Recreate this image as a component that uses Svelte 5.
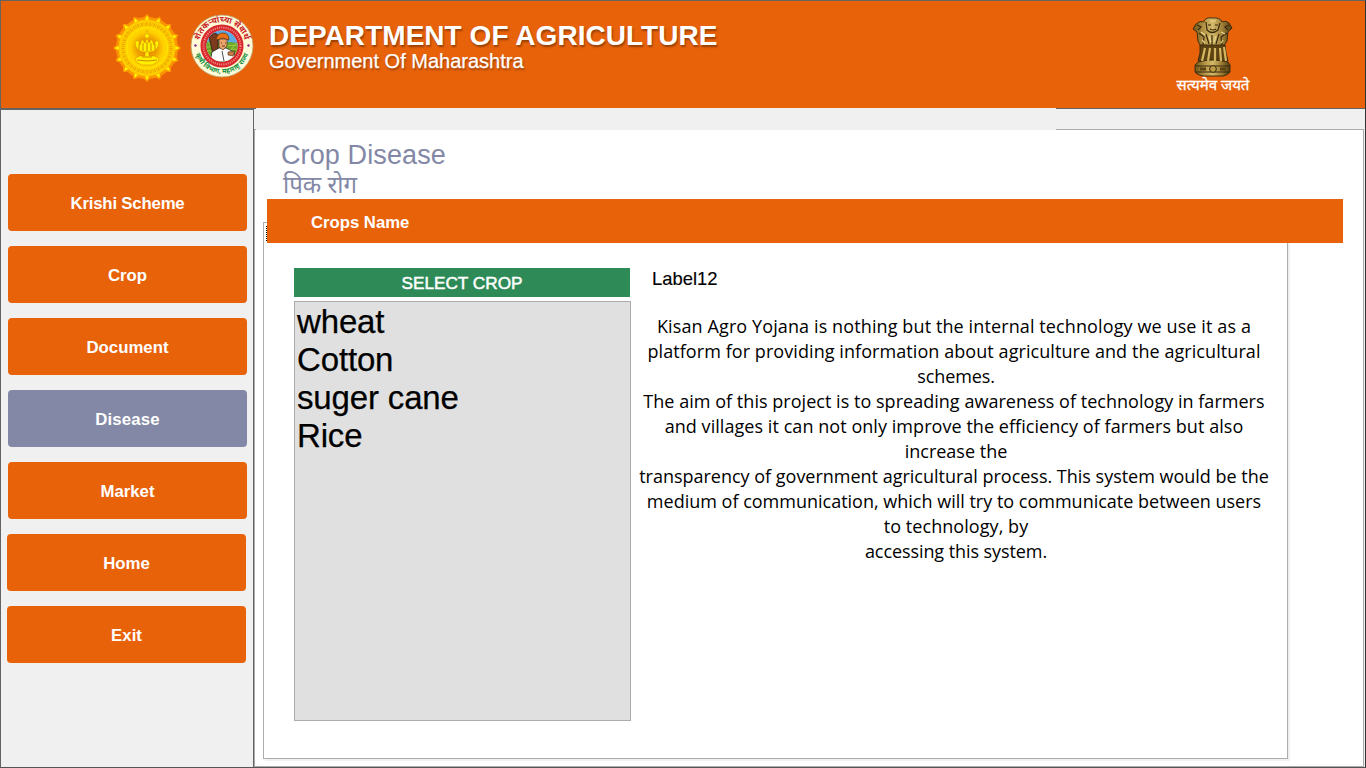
<script>
  const nav = [
    { label: 'Krishi Scheme', ls: -0.2 },
    { label: 'Crop' },
    { label: 'Document' },
    { label: 'Disease', active: true, ls: 0.15 },
    { label: 'Market' },
    { label: 'Home', shifted: true },
    { label: 'Exit', shifted: true }
  ];
  const crops = ['wheat', 'Cotton', 'suger cane', 'Rice'];
  const lines = [
    { text: 'Kisan Agro Yojana is nothing but the internal technology we use it as a', ls: 0.11, wraps: true },
    { text: 'platform for providing information about agriculture and the agricultural', ls: 0.07, wraps: true },
    { text: 'schemes.', ls: -0.1 },
    { text: 'The aim of this project is to spreading awareness of technology in farmers', ls: 0.03, wraps: true },
    { text: 'and villages it can not only improve the efficiency of farmers but also', ls: 0.055, wraps: true },
    { text: 'increase the', ls: 0 },
    { text: 'transparency of government agricultural process. This system would be the', ls: -0.01, wraps: true },
    { text: 'medium of communication, which will try to communicate between users', ls: 0, wraps: true },
    { text: 'to technology, by', ls: 0.06 },
    { text: 'accessing this system.', ls: -0.08 }
  ];
  const rays = Array.from({ length: 16 }, (_, i) => i * 22.5);
</script>

<div class="window">
  <header>
    <svg class="sun" width="70" height="70" viewBox="-35 -35 70 70">
      <defs>
        <radialGradient id="glow">
          <stop offset="0" stop-color="#e27f00" />
          <stop offset=".5" stop-color="#efa000" />
          <stop offset=".8" stop-color="#ffcf00" />
          <stop offset="1" stop-color="#ffd800" />
        </radialGradient>
      </defs>
      <circle r="31" fill="#fb9400" />
      {#each rays as a}
        <g transform="rotate({a})">
          <path d="M-5-29L0-34 5-29Z" fill="#fb9400" />
          <path d="M-2.2-28L0-32.5 2.2-28Z" fill="#fff600" />
        </g>
      {/each}
      <circle r="28" fill="#ffd000" stroke="#ffc000" stroke-width="1" />
      <circle r="24" fill="none" stroke="#eda800" stroke-width="3.6" stroke-dasharray="1.4 .9 .7 1.1" />
      <circle r="20.5" fill="url(#glow)" stroke="#ffe400" stroke-width="1" />
      <g fill="#fff000" stroke="#d78400" stroke-width=".5">
        <path d="M-12-6Q-12 2-4 4H4Q12 2 12-6L9-8 7-3 5-9 2-5 0-10-2-5-5-9-7-3-9-8Z" />
        <path d="M-2 4H2V8H7Q12 9 12 12L9 15 5 17H-5L-9 15-12 12Q-12 9-7 8H-2Z" />
        <circle cy="-12" r="2.4" />
        <circle cy="-17" r="1" />
      </g>
      <path d="M-8-4V2M-4-5V3M0-6V3M4-5V3M8-4V2M-10 12Q0 14 10 12M-5 9H5" fill="none" stroke="#c87a00" stroke-width=".9" />
    </svg>

    <svg class="seal" width="64" height="64" viewBox="-32 -32 64 64">
      <defs>
        <path id="sealTop" d="M-22.6 3.5A23 23 0 1 1 22.6 3.5" />
        <path id="sealBottom" d="M-26.9 6A27.6 27.6 0 0 0 26.9 6" />
        <clipPath id="inner"><circle r="15.5" /></clipPath>
      </defs>
      <circle r="31" fill="#fffbd8" stroke="#b9a26a" stroke-width=".8" />
      <circle r="18.5" fill="none" stroke="#d7262c" stroke-width="6" />
      <circle r="18.5" fill="none" stroke="#f28b80" stroke-width="2" stroke-dasharray="1.1 1.1" />
      <g clip-path="url(#inner)">
        <rect x="-16" y="-16" width="32" height="17" fill="#5ba9e6" />
        <path d="M-16-4Q-4-6 16-3V16H-16Z" fill="#6aa72c" />
        <path d="M-16 1L16-1M-16 5L16 3M-14-4L-4 8M14-3L6 8" stroke="#a7c842" stroke-width=".9" />
        <path d="M-13-9L-7-13-4-11V8L-8 12-10 4Z" fill="#7b3b1c" stroke="#2c1710" stroke-width=".8" />
        <path d="M-12 16L-10 6-3 2H4L12 6 13 16Z" fill="#fff" stroke="#222" stroke-width=".8" />
        <path d="M-3-7H5V0L1 4-3 1Z" fill="#efa469" stroke="#432" stroke-width=".7" />
        <path d="M-6-6Q-5-13 1-13T7-6L1-8Z" fill="#ef7314" stroke="#60300d" stroke-width=".7" />
        <path d="M6 6L13 5 11 10 6 9Z" fill="#c87740" stroke="#432" stroke-width=".6" />
        <path d="M0 5L2 15M-1-3H0M3-3H4M0 0H3" stroke="#222" stroke-width=".8" />
      </g>
      <text class="sealText red"><textPath href="#sealTop" startOffset="50%" text-anchor="middle">शेतकऱ्यांच्या सेवार्थ</textPath></text>
      <text class="sealText green"><textPath href="#sealBottom" startOffset="50%" text-anchor="middle">कृषी विभाग, महाराष्ट्र राज्य</textPath></text>
      <g fill="#8a2a8a"><circle cx="-26.5" cy="-.5" r="1.2" /><circle cx="26.5" cy="-.5" r="1.2" /></g>
    </svg>

    <div class="titles">
      <h1>DEPARTMENT OF AGRICULTURE</h1>
      <p>Government Of Maharashtra</p>
    </div>

    <div class="emblem">
      <svg width="42" height="60" viewBox="0 0 42 60">
        <defs>
          <linearGradient id="gold">
            <stop offset="0" stop-color="#6d5418" />
            <stop offset=".3" stop-color="#b89848" />
            <stop offset=".5" stop-color="#d4ba6a" />
            <stop offset=".75" stop-color="#a08036" />
            <stop offset="1" stop-color="#4f3a10" />
          </linearGradient>
        </defs>
        <g stroke="#33270c" stroke-width=".9" fill="url(#gold)">
          <path d="M12 4Q14 0 20 1 28 0 30 5 34 3 37 6L40 11 36 15 35 24 31 30H9L6 24 5 15 1 12 4 7Q8 3 12 5Z" />
          <path d="M8 28H33L34 36 36 44H6L8 36Z" fill="#5d4312" />
          <path d="M6 45Q21 41 36 45L38 48V55Q36 58 31 59H11Q5 58 3 55V48Z" />
        </g>
        <path d="M13 31L10 44M18 31L16 44M23 31V44M28 31L29 44M32 30L34 44" stroke="#d3b562" stroke-width="2.2" />
        <path d="M14 5L15 13Q20 18 26 13L28 6M16 8H19M23 8H26M18 12Q21 14 24 12M5 8L9 10 6 13M37 8L33 10 36 13M7 16L12 20 11 28M35 16L29 20 30 28M14 17L17 27M27 17L24 27M20 18V28M4 49H38M4 55H37" fill="none" stroke="#38290c" stroke-width="1.2" />
        <path d="M9 15L13 18M29 15L33 17M17 19L19 25M24 19L22 25M10 23L13 26M31 23L29 26M18 4H24" stroke="#e8d58e" stroke-width="1.2" />
        <circle cx="21" cy="52" r="3.4" fill="#bc9b47" stroke="#38290c" />
        <path d="M8 52H14M28 52H34" stroke="#5d4312" stroke-width="3" />
      </svg>
      <span class="motto">सत्यमेव जयते</span>
    </div>
  </header>

  <div class="body">
    <aside>
      {#each nav as item}
        <button class:active={item.active} class:shifted={item.shifted} style="letter-spacing: {item.ls ?? 0}px">{item.label}</button>
      {/each}
    </aside>

    <main>
      <div class="strip"></div>
      <section class="page">
        <h2>Crop Disease</h2>
        <p class="sub">पिक रोग</p>
        <div class="group">
          <div class="banner">Crops Name</div>
          <div class="content">
            <div class="picker">
              <div class="select">SELECT CROP</div>
              <ul>
                {#each crops as crop}<li>{crop}</li>{/each}
              </ul>
            </div>
            <div class="info">
              <div class="label">Label12</div>
              <div class="about">
                {#each lines as line}
                  <div class:wraps={line.wraps}><span style="letter-spacing: {line.ls}px">{line.text}</span></div>
                {/each}
              </div>
            </div>
          </div>
        </div>
      </section>
    </main>
  </div>
</div>

<style>
  :global(body) { margin: 0; overflow: hidden; }
  * { box-sizing: border-box; }
  .window {
    width: 1366px; height: 768px; display: flex; flex-direction: column;
    background: #f0f0f0; border: 1px solid #646464; border-right-color: #333; border-bottom-color: #555;
    font-family: "Liberation Sans", Arial, sans-serif; overflow: hidden;
  }
  header {
    height: 108px; flex: none; background: #e8620a; border-bottom: 1px solid #646464;
    display: flex; align-items: flex-start; padding: 12px 115px 0 111px;
  }
  .seal { margin: 1px 0 0 8px; overflow: visible; }
  .sealText { font-family: "Noto Sans", sans-serif; font-size: 8.4px; font-weight: 700; }
  .red { fill: #c81e28; }
  .green { fill: #149044; font-size: 6.8px; }
  .titles { margin: 7px 0 0 15px; color: #fff; text-shadow: 1px 2px 2px rgba(70, 30, 0, .5); white-space: nowrap; }
  h1 { margin: 0; font-size: 28px; line-height: 32px; font-weight: 700; letter-spacing: .04px; }
  .titles p { margin: -1px 0 0; font-size: 20px; line-height: 20px; -webkit-text-stroke: .25px #fff; }
  .emblem { margin: 4px 0 0 auto; width: 74px; display: flex; flex-direction: column; align-items: center; }
  .emblem svg { display: block; }
  .motto {
    margin-top: -2px; font-family: "Noto Sans", sans-serif; color: #fff; font-size: 15px; line-height: 18px;
    white-space: nowrap; -webkit-text-stroke: .3px #fff;
  }

  .body { flex: 1; display: flex; min-height: 0; }
  aside {
    width: 253px; flex: none; border-right: 1px solid #646464; border-top: 1px solid #646464;
    display: flex; flex-direction: column; gap: 15px; padding: 64px 0 0 7px;
  }
  button {
    width: 239px; height: 57px; flex: none; border: 0; border-radius: 4px; background: #e8620a; color: #fff;
    font: 700 16.8px/57px "Liberation Sans", Arial, sans-serif; padding: 1px 0 0; text-align: center;
  }
  .active { background: #8388a6; }
  .shifted { margin-left: -1px; }

  main { flex: 1; display: flex; flex-direction: column; padding-right: 1px; min-width: 0; }
  .strip { width: 800px; height: 22px; flex: none; margin: -1px 0 -1px 2px; background: #f0f0f0; position: relative; z-index: 1; }
  .page {
    flex: 1; min-height: 0; background: #fff; border: 1px solid #acacac; padding: 9px 0 0 8px;
    display: flex; flex-direction: column;
  }
  h2 { margin: 0 0 0 18px; font-size: 27px; line-height: 32px; font-weight: 400; color: #8388a6; letter-spacing: .12px; }
  .sub { margin: 0 0 0 20px; height: 28px; font: 24px/26px "Noto Sans", sans-serif; color: #8388a6; }
  .group { display: flex; flex-direction: column; height: 560px; }
  .banner {
    margin-left: 4px; width: 1076px; height: 44px; flex: none; background: #e8620a; color: #fff;
    font-size: 16.7px; font-weight: 700; line-height: 47px; padding-left: 44px; position: relative; z-index: 1;
  }
  .banner::before {
    content: ""; position: absolute; left: -1px; top: 27px; width: 1px; height: 16px;
    background: repeating-linear-gradient(#000 0 1px, #fff 1px 2px);
  }
  .content {
    width: 1025px; flex: 1; margin-top: -21px; border: 1px solid #acacac; box-shadow: 2px 2px 0 #f0f0f0;
    padding: 45px 0 0 30px; display: flex;
  }
  .picker { width: 337px; flex: none; }
  .select {
    width: 336px; height: 29px; background: #2e8b57; color: #fff; text-align: center;
    font-size: 17.2px; line-height: 31px; -webkit-text-stroke: .5px #fff;
  }
  ul {
    list-style: none; margin: 4px 0 0; padding: 1px 2px; height: 420px; border: 1px solid #acacac; background: #e0e0e0;
    font-size: 33px; line-height: 38px; color: #000; letter-spacing: -.15px; -webkit-text-stroke: .25px #000;
  }
  .info { margin-left: 5px; width: 640px; }
  .label { padding-left: 16px; font-size: 18.4px; line-height: 21px; height: 22px; -webkit-text-stroke: .15px #000; }
  .about { margin-top: 24px; width: 640px; font: 18px/25px "Open Sans", "Noto Sans", sans-serif; text-align: center; white-space: nowrap; }
  .wraps { padding-right: 4px; }
</style>
